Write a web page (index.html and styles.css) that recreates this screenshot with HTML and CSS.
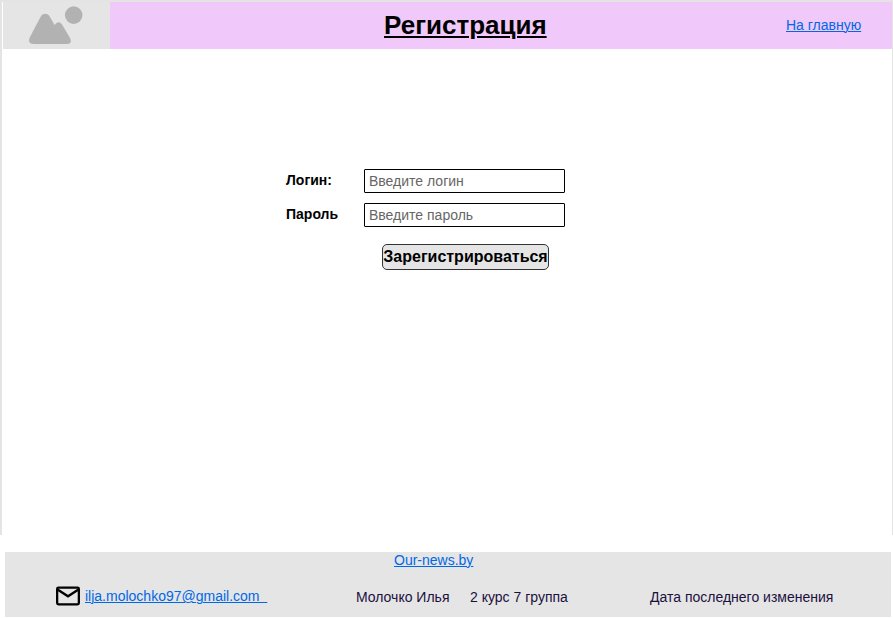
FILE: index.html
```html
<!DOCTYPE html>
<html lang="ru">
<head>
<meta charset="utf-8">
<title>Регистрация</title>
<link rel="stylesheet" href="styles.css">
</head>
<body>
<div class="page">
  <header class="header">
    <div class="logo">
      <svg width="107" height="47" viewBox="3 2 107 47" fill="#b2b2b2" aria-hidden="true">
        <circle cx="73.7" cy="15.1" r="8.8"/>
        <path d="M29.7 37.5 40.5 17 Q42.200 13.700 45.200 13.700 Q48.200 13.700 50 17 L54.500 25 L56 23.500 Q59 20.800 62 24.500 L70.300 38.500 Q72.500 44 66.500 44 H33.500 Q27 44 29.700 37.500Z"/>
      </svg>
    </div>
    <h1 class="title">Регистрация</h1>
    <a class="home" href="#">На главную</a>
  </header>
  <main>
    <form class="form">
      <label for="login">Логин:</label>
      <input id="login" type="text" placeholder="Введите логин">
      <label for="password">Пароль</label>
      <input id="password" type="text" placeholder="Введите пароль">
      <button type="button">Зарегистрироваться</button>
    </form>
  </main>
</div>
<footer class="footer">
  <a class="site" href="#">Our-news.by</a>
  <div class="contacts">
    <svg class="mail" width="24" height="20" viewBox="0 0 24 20" fill="none" stroke="#000" stroke-width="2.3" aria-hidden="true">
      <rect x="1.150" y="1.650" width="21.700" height="16.700" rx="1.300"/>
      <path d="M1.500 3.500 12 10.300 22.500 3.500"/>
    </svg>
    <a class="email" href="#">ilja.molochko97@gmail.com&nbsp;&nbsp;</a>
    <span class="author">Молочко Илья</span>
    <span class="group">2 курс 7 группа</span>
    <span class="date">Дата последнего изменения</span>
  </div>
</footer>
</body>
</html>
```
FILE: styles.css
```css
* { box-sizing: border-box; }
body {
  margin: 0;
  height: 618px;
  overflow: hidden;
  background: #fff;
  color: #000;
  font: 14px/16px "Liberation Sans", Arial, sans-serif;
}
a { color: #0068e5; text-decoration: underline; text-underline-offset: 1px; text-decoration-thickness: 1px; }
.page {
  height: 535px;
  border: solid #e4e4e4;
  border-width: 2px 1px 0 2px;
  padding-left: 1px;
}
.header {
  display: grid;
  grid-template-columns: 107px 1fr 106px;
  height: 47px;
  background: #f0c9fa;
}
.logo { background: #e5e5e5; }
.logo svg { display: block; }
.title {
  margin: 8px 0 0 274px;
  font-size: 26px;
  line-height: 30px;
  text-decoration: underline;
  text-decoration-thickness: 2px;
  text-underline-offset: 2px;
}
.home { margin-top: 15px; white-space: nowrap; }
.form {
  display: grid;
  grid-template-columns: 78px 201px;
  grid-template-rows: 24px 24px 26px;
  row-gap: 10px;
  margin: 120px 0 0 283px;
}
.form label { font-weight: bold; padding-top: 3px; }
.form input {
  width: 201px;
  height: 24px;
  padding: 0 4px;
  border: 1px solid #000;
  border-radius: 1px;
  background: #fff;
  font: inherit;
}
.form input::placeholder { color: #666; opacity: 1; }
.form button {
  grid-column: 2;
  width: 167px;
  height: 26px;
  margin: 7px 0 0 18px;
  padding: 0;
  border: 1px solid #333;
  border-radius: 5px;
  background: #e5e5e5;
  color: #000;
  font: bold 16px/18px "Liberation Sans", Arial, sans-serif;
  white-space: nowrap;
}
.footer {
  height: 65px;
  margin: 17px 2px 0 5px;
  background: #e5e5e5;
}
.site { display: block; width: max-content; margin-left: 389px; }
.contacts {
  display: flex;
  align-items: flex-start;
  padding: 20px 0 0 51px;
  color: #1b103e;
  white-space: nowrap;
}
.mail { margin: -2px 5px 0 0; }
.email { width: 271px; }
.author { width: 114px; margin-top: 1px; }
.group { width: 180px; margin-top: 1px; }
.date { margin-top: 1px; }
```
